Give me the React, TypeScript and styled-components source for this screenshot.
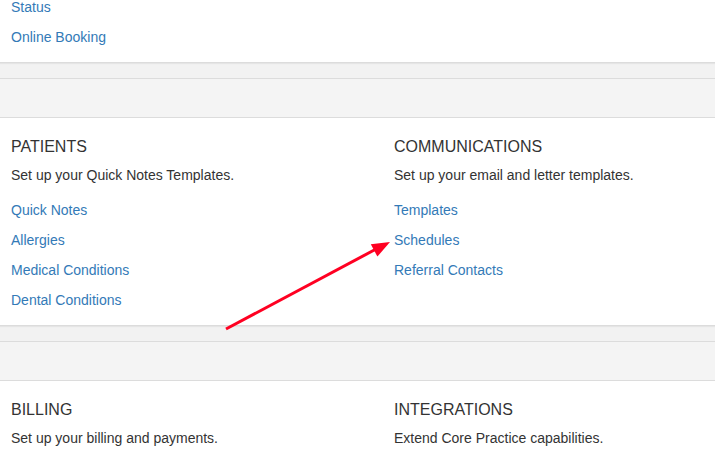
import styled, { createGlobalStyle } from 'styled-components';

const GlobalStyle = createGlobalStyle`
  html, body {
    margin: 0;
    padding: 0;
    background: #f2f2f2;
    font-family: "Liberation Sans", Arial, sans-serif;
    color: #333;
  }
`;

const Page = styled.div`
  position: relative;
  width: 715px;
  height: 450px;
  overflow: hidden;
`;

// the page is scrolled a little, so the first card starts above the window
const Scroll = styled.div`
  margin-top: -8px;
`;

const Card = styled.section<{ first?: boolean }>`
  background: #fff;
  border-bottom: 1px solid #dcdcdc;
  box-shadow: 0 1px 1px rgba(0, 0, 0, 0.05);
  padding: ${(props) => (props.first ? '0' : '19px')} 0 10px;
`;

const Columns = styled.div`
  display: grid;
  grid-template-columns: 383px 1fr;
  padding-left: 11px;
`;

const Column = styled.div`
  display: flex;
  flex-direction: column;
`;

const Title = styled.h3`
  margin: 0;
  font-size: 16px;
  line-height: 20px;
  font-weight: 400;
  color: #333;
`;

const Description = styled.p`
  margin: 8px 0 10px;
  font-size: 14px;
  line-height: 20px;
  color: #333;
`;

const Item = styled.a`
  display: block;
  font-size: 14px;
  line-height: 30px;
  color: #337ab7;
  text-decoration: none;
`;

const Divider = styled.div`
  margin-top: 15px;
  height: 38px;
  border-top: 1px solid #dcdcdc;
  border-bottom: 1px solid #dcdcdc;
  background: #f4f4f4;
`;

const Arrow = styled.svg`
  position: absolute;
  left: 0;
  top: 0;
  pointer-events: none;
`;

type Section = { title: string; text: string; links: string[] };

const middle: Section[] = [
  {
    title: 'PATIENTS',
    text: 'Set up your Quick Notes Templates.',
    links: ['Quick Notes', 'Allergies', 'Medical Conditions', 'Dental Conditions'],
  },
  {
    title: 'COMMUNICATIONS',
    text: 'Set up your email and letter templates.',
    links: ['Templates', 'Schedules', 'Referral Contacts'],
  },
];

const bottom: Section[] = [
  { title: 'BILLING', text: 'Set up your billing and payments.', links: [] },
  { title: 'INTEGRATIONS', text: 'Extend Core Practice capabilities.', links: [] },
];

function SettingsColumn({ section }: { section: Section }) {
  return (
    <Column>
      <Title>{section.title}</Title>
      <Description>{section.text}</Description>
      {section.links.map((link) => (
        <Item key={link} href="#">
          {link}
        </Item>
      ))}
    </Column>
  );
}

export default function App() {
  return (
    <Page>
      <GlobalStyle />
      <Scroll>
        <Card first>
          <Columns>
            <Column>
              <Item href="#">Status</Item>
              <Item href="#">Online Booking</Item>
            </Column>
          </Columns>
        </Card>
        <Divider />
        <Card>
          <Columns>
            {middle.map((s) => (
              <SettingsColumn key={s.title} section={s} />
            ))}
          </Columns>
        </Card>
        <Divider />
        <Card>
          <Columns>
            {bottom.map((s) => (
              <SettingsColumn key={s.title} section={s} />
            ))}
          </Columns>
        </Card>
      </Scroll>
      <Arrow width="715" height="450" viewBox="0 0 715 450">
        <line x1="226" y1="329" x2="378" y2="248" stroke="#ff0022" strokeWidth="3" />
        <polygon points="390,242 377.4,256.6 370.8,244.2" fill="#ff0022" />
      </Arrow>
    </Page>
  );
}
